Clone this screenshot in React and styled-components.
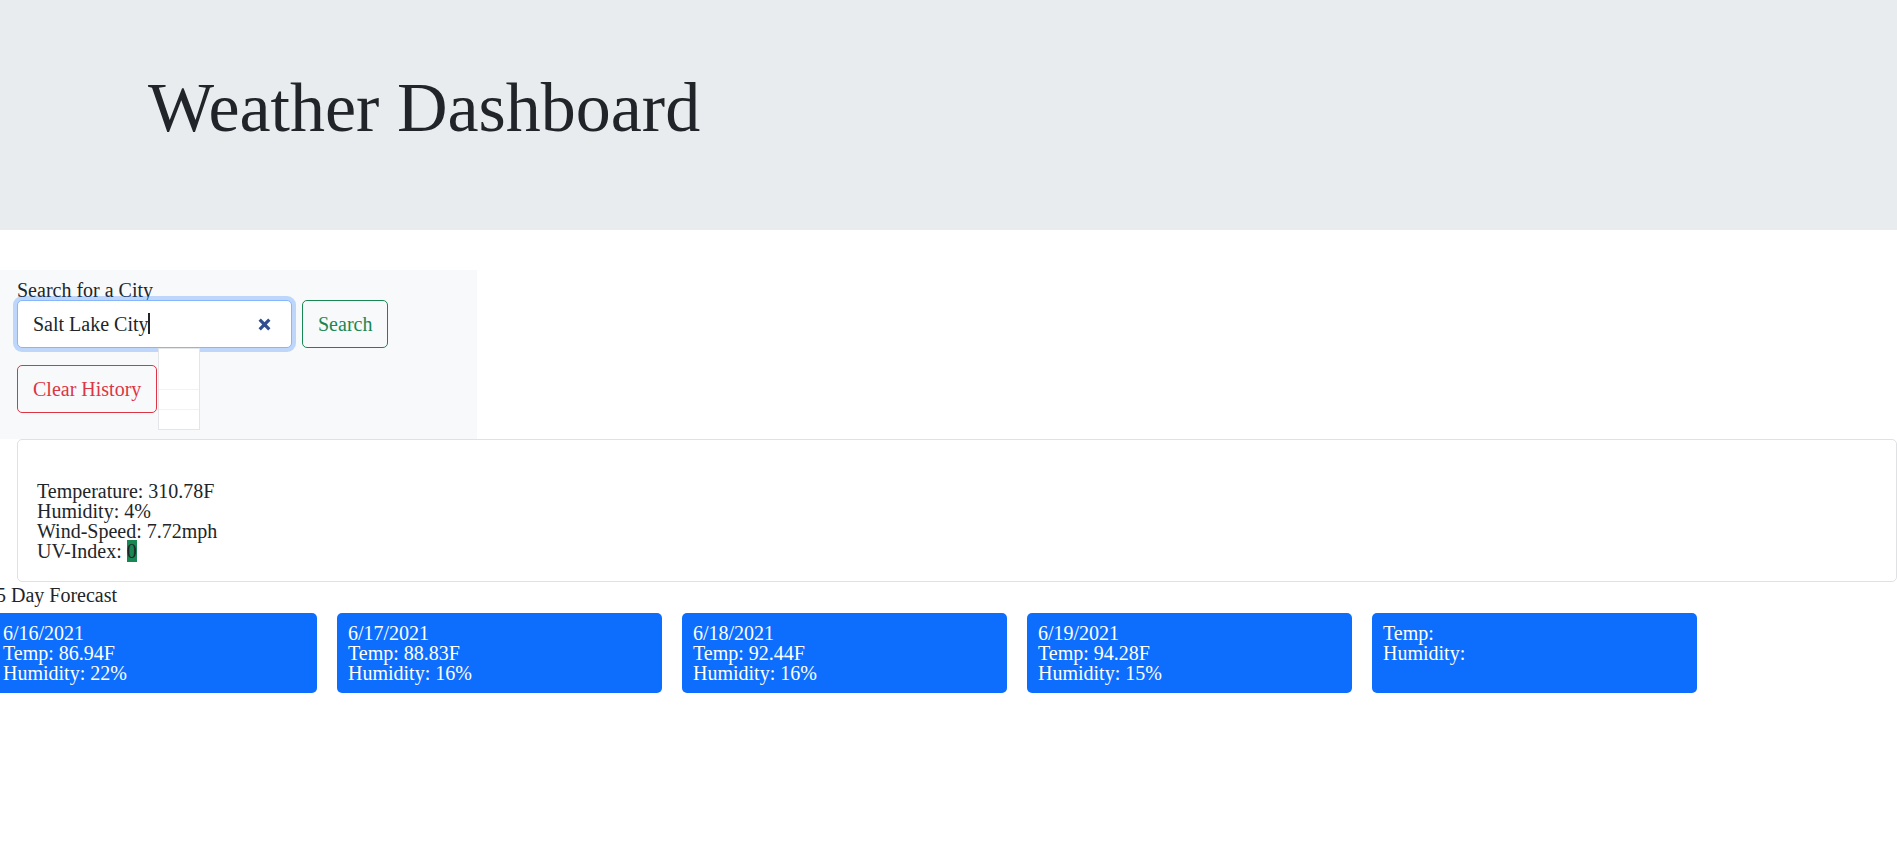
import styled, { createGlobalStyle } from "styled-components"

const GlobalStyle = createGlobalStyle`
    body{
        margin: 0;
        font-family: "Liberation Serif", "Times New Roman", serif;
        font-size: 20px;
        line-height: 20px;
        color: #212529;
        background: #ffffff;
        overflow-x: hidden;
    }
    *{
        box-sizing: border-box;
    }
`

const forecast = [
    {date: "6/16/2021", temp: "86.94F", humidity: "22%"},
    {date: "6/17/2021", temp: "88.83F", humidity: "16%"},
    {date: "6/18/2021", temp: "92.44F", humidity: "16%"},
    {date: "6/19/2021", temp: "94.28F", humidity: "15%"},
    {date: "", temp: "", humidity: ""},
]

export default function App(){
    return(
        <>
            <GlobalStyle/>
            <Header>
                <h1>Weather Dashboard</h1>
            </Header>

            <SearchPanel>
                <Label htmlFor="city">Search for a City</Label>
                <SearchRow>
                    <Field>
                        <input id="city" defaultValue="Salt Lake City" readOnly/>
                        <Caret/>
                        <ClearIcon viewBox="0 0 14 14">
                            <path d="M2.5 2.5 L11.5 11.5 M11.5 2.5 L2.5 11.5"/>
                        </ClearIcon>
                        <Suggestions>
                            <li/>
                            <li/>
                            <li/>
                        </Suggestions>
                    </Field>
                    <OutlineButton $color="#198754">Search</OutlineButton>
                </SearchRow>
                <OutlineButton $color="#dc3545" $top="17px">Clear History</OutlineButton>
            </SearchPanel>

            <CurrentCard>
                <CityName/>
                <p>Temperature: 310.78F</p>
                <p>Humidity: 4%</p>
                <p>Wind-Speed: 7.72mph</p>
                <p>UV-Index: <UvBadge>0</UvBadge></p>
            </CurrentCard>

            <ForecastTitle>5 Day Forecast</ForecastTitle>
            <ForecastRow>
                {forecast.map((day, i) => (
                    <ForecastCard key={i}>
                        {day.date && <p>{day.date}</p>}
                        <p>Temp: {day.temp}</p>
                        <p>Humidity: {day.humidity}</p>
                    </ForecastCard>
                ))}
            </ForecastRow>
        </>
    )
}

const Header = styled.header`
    background-color: #e9ecef;
    height: 230px;
    padding: 66px 0 0 148px;
    margin-bottom: 40px;
    & h1{
        margin: 0;
        font-size: 70px;
        font-weight: 300;
        line-height: 84px;
    }
`

const SearchPanel = styled.section`
    width: 477px;
    background-color: #f8f9fa;
    padding: 10px 17px 26px;
`

const Label = styled.label`
    display: block;
    line-height: 20px;
`

const SearchRow = styled.div`
    display: flex;
    align-items: center;
    gap: 10px;
`

const Field = styled.div`
    position: relative;
    display: flex;
    align-items: center;
    width: 275px;
    height: 48px;
    padding: 0 19px 0 15px;
    background: #ffffff;
    border: 1px solid #86b7fe;
    border-radius: 5px;
    box-shadow: 0 0 0 4px rgba(13, 110, 253, 0.25);
    & input{
        flex: 1;
        min-width: 0;
        border: none;
        outline: none;
        background: transparent;
        font: inherit;
        color: #212529;
        padding: 0;
    }
`

const Caret = styled.span`
    position: absolute;
    left: 130px;
    top: 12px;
    width: 2px;
    height: 21px;
    background: #212529;
`

const ClearIcon = styled.svg`
    width: 15px;
    height: 15px;
    & path{
        stroke: #2f4f8f;
        stroke-width: 3;
        fill: none;
    }
`

const Suggestions = styled.ul`
    position: absolute;
    top: 47px;
    left: 140px;
    width: 42px;
    margin: 0;
    padding: 0;
    list-style: none;
    background: #ffffff;
    border: 1px solid #e3e5e8;
    & li{
        height: 20px;
        border-top: 1px solid #f1f2f4;
    }
    & li:first-child{
        height: 40px;
        border-top: none;
    }
`

const OutlineButton = styled.button`
    display: block;
    height: 48px;
    margin-top: ${p => p.$top || "0"};
    padding: 0 15px;
    background: transparent;
    border: 1px solid ${p => p.$color};
    border-radius: 5px;
    color: ${p => p.$color};
    font: inherit;
    line-height: 20px;
`

const CurrentCard = styled.section`
    margin-left: 17px;
    border: 1px solid #dfe1e3;
    border-radius: 5px;
    padding: 19px 19px 20px;
    & p{
        margin: 0;
        line-height: 20px;
    }
`

const CityName = styled.h2`
    margin: 0;
    height: 22px;
`

const UvBadge = styled.span`
    background-color: #198754;
    color: #212529;
`

const ForecastTitle = styled.h5`
    margin: 3px 0 8px -4px;
    font-size: 20px;
    font-weight: 400;
    line-height: 20px;
`

const ForecastRow = styled.div`
    display: flex;
    gap: 20px;
    margin-left: -8px;
`

const ForecastCard = styled.div`
    flex: 0 0 325px;
    height: 80px;
    padding: 10px 11px;
    background-color: #0d6efd;
    border-radius: 5px;
    color: #ffffff;
    & p{
        margin: 0;
        line-height: 20px;
    }
`
